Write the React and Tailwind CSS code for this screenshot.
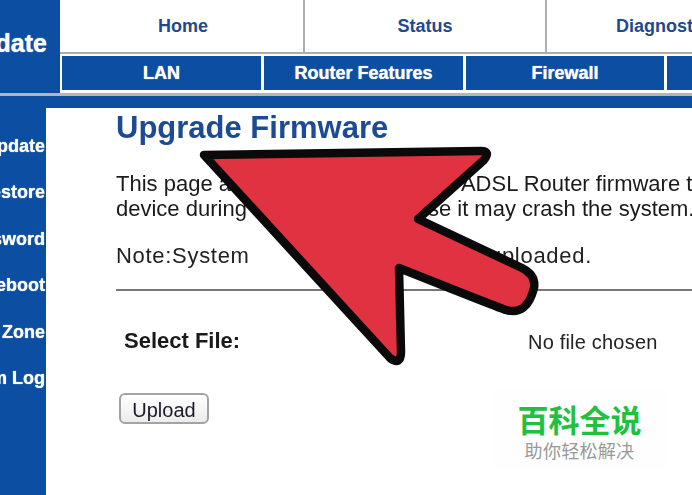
const mainTabs = ["Home", "Status", "Diagnostics"];

const subTabs = [
  { label: "LAN", width: "w-[199px]" },
  { label: "Router Features", width: "w-[199px]" },
  { label: "Firewall", width: "w-[198px]" },
  { label: "Wireless", width: "w-[200px]" },
];

const sideLinks = ["Firmware Update", "Backup/Restore", "Password", "Reboot", "Time Zone", "System Log"];

function PointerArrow() {
  return (
    <svg className="absolute left-0 top-0 pointer-events-none" width="692" height="495" viewBox="0 0 692 495">
      <path
        d="M204 155 L481 151 Q491 151 484 160 L418 219 L522 268 Q536 275 534 288 Q527 316 506 310 Q502 309 399 268 L401 352 Q401 366 390 358 Z"
        fill="#e03240"
        stroke="#0a0a0a"
        strokeWidth="8.5"
        strokeLinejoin="round"
      />
    </svg>
  );
}

export default function App() {
  return (
    <div className="relative w-[692px] h-[495px] overflow-hidden bg-white font-['Liberation_Sans',Arial,sans-serif]">
      <div className="flex flex-col h-full blur-[0.5px]">
        {/* Top nav */}
        <div className="flex h-[96px] shrink-0 bg-[#0b4ea2] border-b-[3px] border-[#b5b5b5]">
          <div className="w-[60px] shrink-0 flex justify-end items-center overflow-hidden pr-[13px]">
            <span className="whitespace-nowrap text-[25px] font-bold text-white pb-[6px] [text-shadow:0_0_1px_#fff]">Update</span>
          </div>
          <div className="flex-1 min-w-0 bg-white overflow-hidden">
            <div className="flex h-[54px] pl-[3px] border-b-2 border-[#adadad]">
              {mainTabs.map((tab) => (
                <div
                  key={tab}
                  className="w-[242px] shrink-0 border-r-2 border-[#adadad] flex items-center justify-center text-[18px] font-bold text-[#22498f]"
                >
                  {tab}
                </div>
              ))}
            </div>
            <div className="flex gap-[3px] pl-[2px] pt-[2px]">
              {subTabs.map((tab) => (
                <div
                  key={tab.label}
                  className={`${tab.width} h-[34px] shrink-0 bg-[#0b4ea2] flex items-center justify-center text-[18px] font-bold text-white [text-shadow:0_0_1px_#fff]`}
                >
                  {tab.label}
                </div>
              ))}
            </div>
          </div>
        </div>

        {/* Blue band */}
        <div className="h-[12px] shrink-0 bg-[#0b4ea2]" />

        <div className="flex flex-1 min-h-0">
          {/* Side menu */}
          <div className="w-[46px] shrink-0 bg-[#0b4ea2] overflow-hidden flex flex-col items-end pt-[15px] pr-[1px]">
            {sideLinks.map((link) => (
              <div key={link} className="h-[46.4px] leading-[46.4px] whitespace-nowrap text-[18px] font-bold text-white [text-shadow:0_0_1px_#fff]">
                {link}
              </div>
            ))}
          </div>

          {/* Content */}
          <div className="flex-1 min-w-0 pl-[70px] overflow-hidden">
            <h1 className="h-[38px] leading-[38px] pt-[1px] text-[31px] font-bold text-[#1c4a94] whitespace-nowrap">Upgrade Firmware</h1>
            <p className="mt-[25px] text-[22px] leading-[25px] text-[#1a1a1a] whitespace-nowrap">
              This page allows you to update the ADSL Router firmware to the
              <br />
              device during the upload, because it may crash the system.
            </p>
            <div className="flex mt-[22px] text-[22px] leading-[25px] tracking-[0.7px] text-[#222] whitespace-nowrap">
              <span className="w-[373px] shrink-0">Note:System</span>
              <span>uploaded.</span>
            </div>
            <div className="mt-[21px] h-[2px] bg-[#777]" />
            <div className="flex items-center h-[30px] mt-[34px] pl-[8px]">
              <span className="w-[404px] shrink-0 text-[22px] font-bold text-[#1a1a1a]">Select File:</span>
              <span className="text-[20px] tracking-[0.2px] text-[#222] whitespace-nowrap pt-[3px]">No file chosen</span>
            </div>
            <button className="block mt-[38px] ml-[3px] w-[90px] h-[31px] pb-[4px] rounded-[6px] border-2 border-[#a3a3a3] bg-gradient-to-b from-white to-[#ececec] text-[20px] text-[#1a1a2a]">
              Upload
            </button>
          </div>
        </div>
      </div>

      <PointerArrow />

      {/* Watermark */}
      <div className="absolute left-[494px] top-[390px] w-[172px] h-[80px] bg-[#fefefe] flex flex-col items-center font-['Noto_Sans_CJK_SC',sans-serif]">
        <span className="mt-[11px] -ml-[1px] text-[31px] leading-[36px] font-bold text-[#1fc13f]">百科全说</span>
        <span className="mt-[2px] -ml-[1px] text-[18px] leading-[22px] tracking-[0.3px] text-[#999]">助你轻松解决</span>
      </div>
    </div>
  );
}
